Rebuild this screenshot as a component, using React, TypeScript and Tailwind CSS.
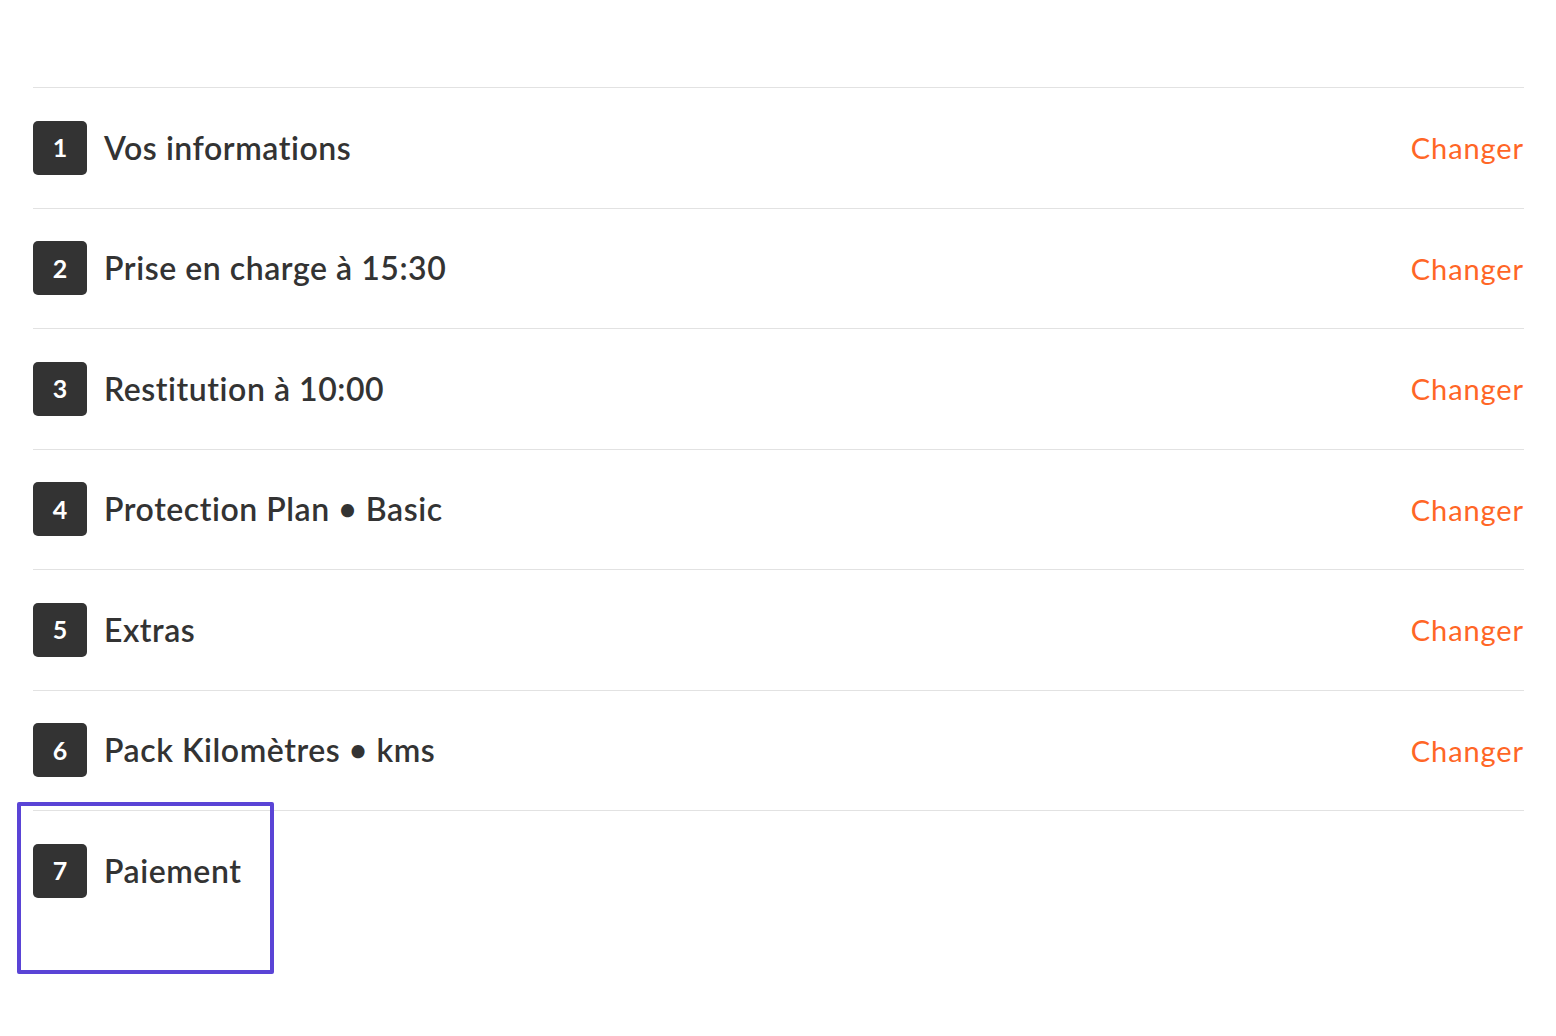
const steps = [
  { n: 1, label: 'Vos informations', done: true },
  { n: 2, label: 'Prise en charge à 15:30', done: true },
  { n: 3, label: 'Restitution à 10:00', done: true },
  { n: 4, label: 'Protection Plan • Basic', done: true },
  { n: 5, label: 'Extras', done: true },
  { n: 6, label: 'Pack Kilomètres • kms', done: true },
  { n: 7, label: 'Paiement', done: false },
]

export default function App() {
  return (
    <div
      className="relative min-h-[1036px] bg-white pt-[87px] pl-[33px] pr-[32px] text-[#333333]"
      style={{ fontFamily: 'Lato, "Noto Sans", sans-serif' }}
    >
      {steps.map((s) => (
        <div
          key={s.n}
          className="flex h-[120.5px] items-center border-t border-[#e2e2e2]"
        >
          <div className="flex h-[54px] w-[54px] flex-none items-center justify-center rounded-[5px] bg-[#333333] text-[25px] font-bold text-white">
            {s.n}
          </div>
          <div className="ml-[17px] flex-1 text-[32px] font-semibold tracking-[0.55px]">{s.label}</div>
          {s.done && (
            <button className="text-[29px] tracking-[0.9px] text-[#ff6626]">Changer</button>
          )}
        </div>
      ))}
      <div className="absolute left-[17px] top-[802px] h-[172px] w-[257px] rounded-[2px] border-4 border-[#5a44d6]" />
    </div>
  )
}
